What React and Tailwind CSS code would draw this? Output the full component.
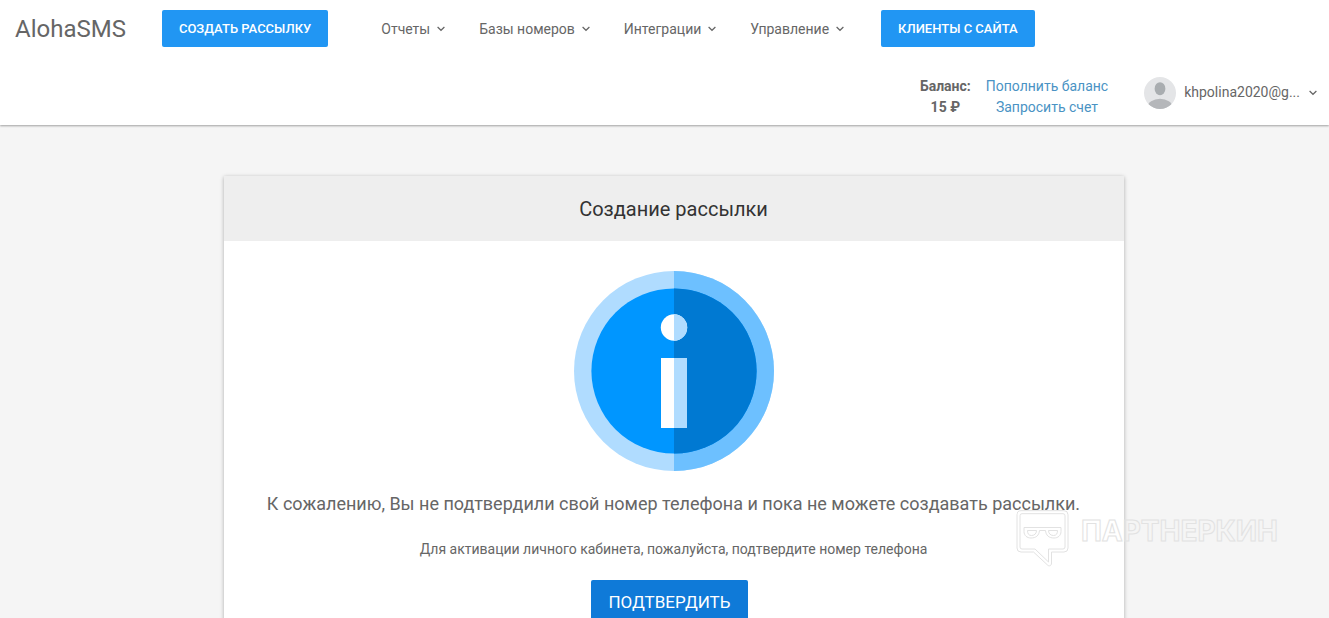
import React from 'react';

const menu = ['Отчеты', 'Базы номеров', 'Интеграции', 'Управление'];

function Chevron() {
  return (
    <svg className="w-2 h-2 shrink-0" viewBox="0 0 8 8" fill="none" stroke="currentColor" strokeWidth="1.2" aria-hidden="true">
      <path d="M.6 2 4 5.300 7.400 2" />
    </svg>
  );
}

function Avatar() {
  return (
    <svg className="w-8 h-8 shrink-0" viewBox="0 0 32 32" aria-hidden="true">
      <defs>
        <clipPath id="avatar-clip">
          <circle cx="16" cy="16" r="16" />
        </clipPath>
      </defs>
      <g clipPath="url(#avatar-clip)">
        <rect width="32" height="32" fill="#e4e5e7" />
        <ellipse cx="16" cy="11.7" rx="5.4" ry="6.5" fill="#a9adb0" />
        <ellipse cx="16" cy="30.5" rx="12.5" ry="8.7" fill="#b5b7ba" />
      </g>
    </svg>
  );
}

function InfoIcon() {
  return (
    <svg className="w-[200px] h-[200px]" viewBox="0 0 200 200" aria-hidden="true">
      <circle cx="100" cy="100" r="100" fill="#b0dcff" />
      <path d="M100 0a100 100 0 0 1 0 200z" fill="#6dc0ff" />
      <circle cx="100" cy="100" r="82.6" fill="#0096ff" />
      <path d="M100 17.4a82.6 82.6 0 0 1 0 165.2z" fill="#0079d2" />
      <circle cx="100" cy="56.5" r="13.2" fill="#fff" />
      <path d="M100 43.3a13.2 13.2 0 0 1 0 26.4z" fill="#b0dcff" />
      <path d="M87 87h13v70H87z" fill="#fff" />
      <path d="M100 87h13v70h-13z" fill="#b0dcff" />
    </svg>
  );
}

function Watermark() {
  return (
    <div className="absolute right-[51px] top-[510px] flex items-start gap-3 pointer-events-none">
      <svg className="w-[53px] h-[57px]" viewBox="0 0 53 57" fill="none" stroke="#e2e2e2" strokeWidth="1" aria-hidden="true">
        <path d="M5 .7h43a4 4 0 0 1 4 4V38a4 4 0 0 1-4 4H35.500V53c0 3-2.500 3.500-4 2L17.500 42H5a4 4 0 0 1-4-4V4.700a4 4 0 0 1 4-4z" />
        <path d="M6 3.700h41a2 2 0 0 1 2 2V37a2 2 0 0 1-2 2H32.500V52L19 39H6a2 2 0 0 1-2-2V5.700a2 2 0 0 1 2-2z" />
        <path d="M8 17.500h37v4c0 4-3 6.500-7 6.500-5 0-8-2.500-8.500-7.500h-6C23 25.500 20 28 15 28c-4 0-7-2.500-7-6.500z" />
        <path d="M11.500 20.500h9c0 3-2 5-5 5s-4-2-4-5zM32.500 20.500h9c0 3-1 5-4 5s-5-2-5-5z" />
      </svg>
      <span className="font-['Inter',sans-serif] text-[28px] leading-[42px] font-bold text-transparent [-webkit-text-stroke:1px_#e2e2e2]">
        ПАРТНЕРКИН
      </span>
    </div>
  );
}

function Header() {
  return (
    <header className="bg-white pt-[10px] pb-[7px] shadow-[0_1px_2px_rgba(0,0,0,0.35)]">
      <nav className="flex items-center pl-[15px] h-[37px]">
        <a href="#" className="text-[24px] leading-8 mr-9">AlohaSMS</a>
        <button type="button" className="h-[37px] px-[17px] rounded-xs bg-[#2196f3] text-[13px] font-medium text-white uppercase">
          Создать рассылку
        </button>
        <ul className="flex items-center gap-[34px] pt-px ml-[53px] mr-[37px]">
          {menu.map((item) => (
            <li key={item}>
              <a href="#" className="flex items-center gap-[7px]">
                {item}
                <Chevron />
              </a>
            </li>
          ))}
        </ul>
        <button type="button" className="h-[37px] px-[17px] rounded-xs bg-[#2196f3] text-[13px] font-medium text-white uppercase">
          Клиенты с сайта
        </button>
      </nav>
      <div className="flex justify-end items-start mt-[29px] pr-3 text-center leading-[21px]">
        <div className="font-bold">
          Баланс:
          <br />
          15 ₽
        </div>
        <div className="flex flex-col ml-[15px] mr-9 text-[#4a93c4]">
          <a href="#">Пополнить баланс</a>
          <a href="#">Запросить счет</a>
        </div>
        <button type="button" className="flex items-center mt-px gap-2">
          <Avatar />
          <span className="pb-px pr-px">khpolina2020@g...</span>
          <Chevron />
        </button>
      </div>
    </header>
  );
}

function App() {
  return (
    <div className="relative h-screen overflow-hidden bg-[#f5f5f5] font-['Roboto',sans-serif] text-[14px] text-[#666]">
      <Header />
      <main className="pl-[18px] pt-[51px]">
        <section className="max-w-[900px] mx-auto bg-white text-center shadow-[0_1px_4px_rgba(0,0,0,0.3)]">
          <h1 className="bg-[#eee] pt-[21px] pb-5 text-[20px] leading-6 text-[#333]">Создание рассылки</h1>
          <div className="flex flex-col items-center pt-[30px] pb-10">
            <InfoIcon />
            <h2 className="mt-[21px] text-[18px] leading-6">
              К сожалению, Вы не подтвердили свой номер телефона и пока не можете создавать рассылки.
            </h2>
            <p className="mt-[23px] leading-5">Для активации личного кабинета, пожалуйста, подтвердите номер телефона</p>
            <button type="button" className="mt-[21px] mr-2 px-[17px] h-[45px] rounded-xs bg-[#0f7ad8] text-[17px] text-white uppercase">
              Подтвердить
            </button>
          </div>
        </section>
      </main>
      <Watermark />
    </div>
  );
}

export default App;
